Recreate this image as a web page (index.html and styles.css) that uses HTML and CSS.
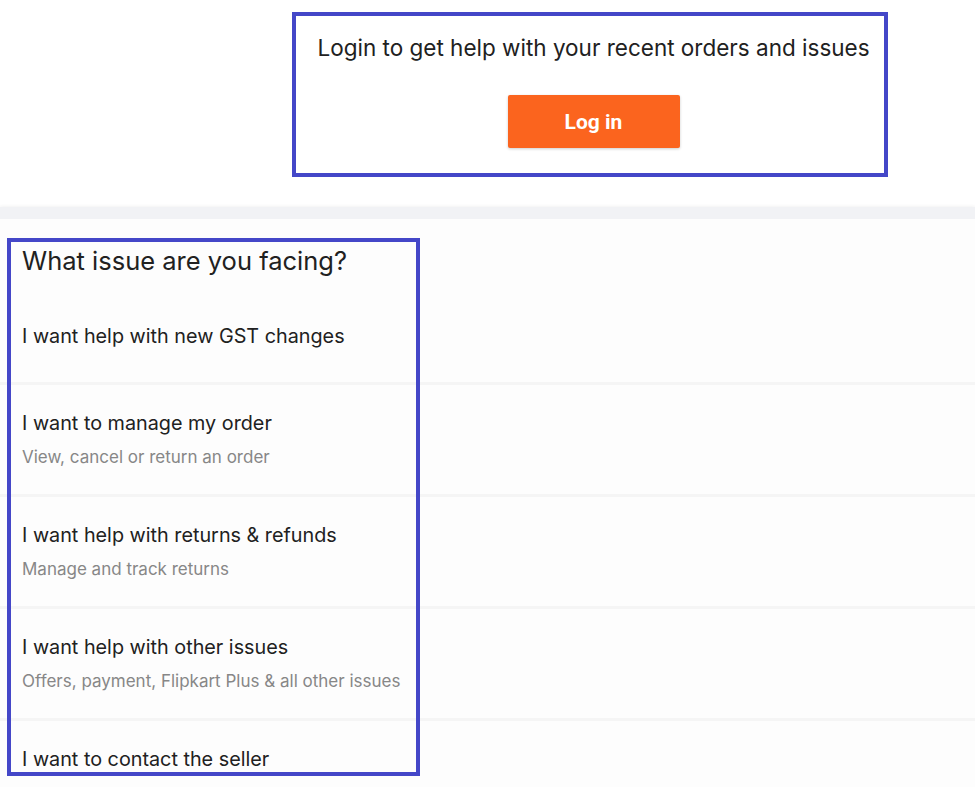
FILE: index.html
```html
<!DOCTYPE html>
<html>

<head>
  <title>Help Centre</title>

  <link rel="stylesheet" href="styles.css">
</head>

<body>

  <div class = "login-area">
    <div class = "login-card">
      <p class = "login-text">Login to get help with your recent orders and issues</p>
      <button class = "login-button">Log in</button>
    </div>
  </div>

  <div class = "band"></div>

  <div class = "issues">
    <h2 class = "issues-title">What issue are you facing?</h2>

    <div class = "issue issue-first">
      <div class = "issue-name">I want help with new GST changes</div>
    </div>

    <div class = "issue">
      <div class = "issue-name">I want to manage my order</div>
      <div class = "issue-note">View, cancel or return an order</div>
    </div>

    <div class = "issue">
      <div class = "issue-name">I want help with returns &amp; refunds</div>
      <div class = "issue-note">Manage and track returns</div>
    </div>

    <div class = "issue">
      <div class = "issue-name">I want help with other issues</div>
      <div class = "issue-note">Offers, payment, Flipkart Plus &amp; all other issues</div>
    </div>

    <div class = "issue issue-last">
      <div class = "issue-name">I want to contact the seller</div>
    </div>

    <div class = "issues-outline"></div>
  </div>

</body>

</html>
```

FILE: styles.css
```css
body {
  margin: 0;
  padding: 0;
  background-color: #ffffff;
  font-family: Inter, "Noto Sans", sans-serif;
  color: #212121;
  height: 787px;
  overflow: hidden;
}

.login-area {
  padding: 12px 0 30px 292px;
}

.login-card {
  width: 555px;
  height: 157px;
  border: solid #4447c8 4px;
  padding: 0 13px 0 20px;
  text-align: center;
}

.login-text {
  margin: 0;
  padding-top: 18px;
  font-size: 22.5px;
  line-height: 28px;
  white-space: nowrap;
}

.login-button {
  margin-top: 33px;
  width: 172px;
  height: 53px;
  border: none;
  border-radius: 2px;
  background-color: #fb641e;
  color: white;
  font-family: Roboto, "Liberation Sans", sans-serif;
  font-weight: 700;
  font-size: 21px;
  box-shadow: 0 1px 3px rgba(0, 0, 0, 0.2);
}

.band {
  height: 12px;
  background-color: #f1f2f5;
  box-shadow: 0 -1px 3px rgba(0, 0, 0, 0.05);
}

.issues {
  position: relative;
  padding-top: 27px;
  background-color: #fdfdfd;
}

.issues-title {
  margin: 0 0 21px 22px;
  font-size: 25.5px;
  font-weight: 400;
  line-height: 30px;
}

.issue {
  padding: 26px 22px 26px 22px;
  border-bottom: solid #f5f5f5 3px;
}

.issue-first {
  padding-top: 27px;
  padding-bottom: 34px;
}

.issue-last {
  border-bottom: none;
}

.issue-name {
  font-size: 19.8px;
  line-height: 24px;
}

.issue-note {
  margin-top: 11px;
  font-size: 17px;
  line-height: 22px;
  color: #878787;
}

.issues-outline {
  position: absolute;
  top: 19px;
  left: 7px;
  width: 405px;
  height: 530px;
  border: solid #4447c8 4px;
}
```
